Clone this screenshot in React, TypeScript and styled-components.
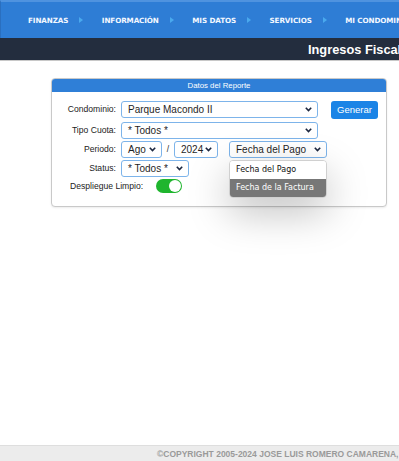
import styled, { createGlobalStyle } from 'styled-components'

const GlobalStyle = createGlobalStyle`
  html, body {
    margin: 0;
    padding: 0;
    overflow: hidden;
    background: #ffffff;
  }
  body {
    font-family: 'Liberation Sans', Arial, sans-serif;
  }
`

const sans = `'Liberation Sans', Arial, sans-serif`

const Page = styled.div`
  display: flex;
  flex-direction: column;
  height: 461px;
  width: 399px;
  overflow: hidden;
`

const NavBar = styled.nav`
  flex: none;
  height: 36px;
  display: flex;
  align-items: center;
  padding-left: 27px;
  background: #2e7dd5;
  border-top: 2px solid #4f93df;
  border-left: 1px solid #2a6fbf;
  white-space: nowrap;
  overflow: hidden;
`

const NavItem = styled.a`
  display: flex;
  align-items: center;
  flex: none;
  margin-right: 18.5px;
  color: #f4f8ff;
  font-family: 'DejaVu Sans', Verdana, sans-serif;
  font-weight: bold;
  font-size: 7.2px;
  letter-spacing: -0.1px;
  text-decoration: none;
`

const NavArrow = styled.span`
  width: 0;
  height: 0;
  margin-left: 11px;
  border-top: 3px solid transparent;
  border-bottom: 3px solid transparent;
  border-left: 4px solid #4aa9ee;
`

const TitleBar = styled.header`
  flex: none;
  height: 22px;
  display: flex;
  align-items: center;
  padding-left: 308px;
  background: #232d3e;
  border-bottom: 1px solid #c8c8c8;
  white-space: nowrap;
  overflow: hidden;
`

const Title = styled.h1`
  margin: 0;
  color: #ffffff;
  font-family: ${sans};
  font-size: 12.8px;
  font-weight: bold;
`

const Main = styled.main`
  flex: 1;
  padding: 17px 0 0 51px;
`

const Card = styled.section`
  width: 334px;
  border: 1px solid #c9c9c9;
  border-radius: 4px;
  background: #ffffff;
  box-shadow: 0 1px 2px rgba(0, 0, 0, 0.08);
`

const CardHeader = styled.div`
  height: 13px;
  line-height: 13px;
  background: #2f7fd7;
  border-radius: 3px 3px 0 0;
  color: #ffffff;
  text-align: center;
  font-family: ${sans};
  font-size: 7.8px;
`

const Form = styled.div`
  display: flex;
  flex-direction: column;
  padding: 9px 0 13px 0;
`

const Row = styled.div<{ $h: number; $indent?: number }>`
  display: flex;
  align-items: flex-start;
  height: ${(p) => p.$h}px;
  padding-left: ${(p) => p.$indent ?? 0}px;
  position: relative;
`

const Label = styled.label<{ $auto?: boolean }>`
  flex: none;
  width: ${(p) => (p.$auto ? 'auto' : '64px')};
  height: ${(p) => (p.$auto ? '14px' : '17px')};
  line-height: ${(p) => (p.$auto ? '14px' : '17px')};
  margin-right: ${(p) => (p.$auto ? '13px' : '5px')};
  text-align: right;
  color: #222222;
  font-family: ${sans};
  font-size: 8.6px;
`

const SelectBox = styled.div<{ $w: number }>`
  position: relative;
  flex: none;
  box-sizing: border-box;
  width: ${(p) => p.$w}px;
  height: 17px;
  padding: 0 16px 0 6px;
  border: 1px solid #7db4ea;
  border-radius: 3px;
  background: #ffffff;
  color: #1f1f1f;
  font-family: ${sans};
  font-size: 10px;
  line-height: 15px;
  white-space: nowrap;
`

const Chevron = styled.svg`
  position: absolute;
  right: 5px;
  top: 5px;
  width: 7px;
  height: 5px;
`

const Slash = styled.span`
  flex: none;
  width: 12px;
  text-align: center;
  line-height: 17px;
  color: #2b2b2b;
  font-family: ${sans};
  font-size: 8.5px;
`

const Spacer = styled.span<{ $w: number }>`
  flex: none;
  width: ${(p) => p.$w}px;
`

const Button = styled.button`
  flex: none;
  width: 47px;
  height: 18px;
  margin-left: 13px;
  padding: 0;
  border: none;
  border-radius: 3px;
  background: #1b84e6;
  color: #ffffff;
  font-family: ${sans};
  font-size: 9.5px;
  line-height: 18px;
`

const Toggle = styled.span`
  position: relative;
  flex: none;
  box-sizing: border-box;
  width: 26px;
  height: 14px;
  border-radius: 7px;
  background: #1fb52e;
`

const Knob = styled.span`
  position: absolute;
  right: 1px;
  top: 1px;
  width: 12px;
  height: 12px;
  border-radius: 50%;
  background: #ffffff;
`

const Menu = styled.ul`
  position: absolute;
  left: 177px;
  top: 19px;
  width: 98px;
  box-sizing: border-box;
  margin: 0;
  padding: 0;
  list-style: none;
  border: 1px solid #d0d0d0;
  border-radius: 4px;
  background: #ffffff;
  box-shadow: 0 14px 40px rgba(0, 0, 0, 0.26);
  overflow: hidden;
  z-index: 2;
`

const MenuItem = styled.li<{ $active?: boolean }>`
  height: 18px;
  line-height: 18px;
  padding-left: 6px;
  background: ${(p) => (p.$active ? '#777777' : '#ffffff')};
  color: ${(p) => (p.$active ? '#ffffff' : '#111111')};
  font-family: 'DejaVu Sans', Verdana, sans-serif;
  font-size: 8px;
  white-space: nowrap;
`

const Footer = styled.footer`
  flex: none;
  height: 15px;
  display: flex;
  align-items: center;
  padding-left: 157px;
  background: #ececec;
  border-top: 1px solid #dedede;
  color: #9a9a9a;
  font-family: ${sans};
  font-size: 8.5px;
  font-weight: bold;
  white-space: nowrap;
  overflow: hidden;
`

function Select({ w, value }: { w: number; value: string }) {
  return (
    <SelectBox $w={w}>
      {value}
      <Chevron viewBox='0 0 7 5'>
        <polyline points='0.8,0.8 3.5,3.6 6.2,0.8' fill='none' stroke='#1c2740' strokeWidth='1.6' />
      </Chevron>
    </SelectBox>
  )
}

const navItems = ['FINANZAS', 'INFORMACIÓN', 'MIS DATOS', 'SERVICIOS', 'MI CONDOMINIO', 'SALIR']

export default function App() {
  return (
    <>
      <GlobalStyle />
      <Page>
        <NavBar>
          {navItems.map((item) => (
            <NavItem key={item}>
              {item}
              <NavArrow />
            </NavItem>
          ))}
        </NavBar>
        <TitleBar>
          <Title>Ingresos Fiscales</Title>
        </TitleBar>
        <Main>
          <Card>
            <CardHeader>Datos del Reporte</CardHeader>
            <Form>
              <Row $h={21}>
                <Label>Condominio:</Label>
                <Select w={197} value='Parque Macondo II' />
                <Button>Generar</Button>
              </Row>
              <Row $h={19}>
                <Label>Tipo Cuota:</Label>
                <Select w={197} value='* Todos *' />
              </Row>
              <Row $h={19}>
                <Label>Periodo:</Label>
                <Select w={41} value='Ago' />
                <Slash>/</Slash>
                <Select w={44} value='2024' />
                <Spacer $w={11} />
                <Select w={98} value='Fecha del Pago' />
                <Menu>
                  <MenuItem>Fecha del Pago</MenuItem>
                  <MenuItem $active>Fecha de la Factura</MenuItem>
                </Menu>
              </Row>
              <Row $h={19}>
                <Label>Status:</Label>
                <Select w={68} value='* Todos *' />
              </Row>
              <Row $h={14} $indent={18}>
                <Label $auto>Despliegue Limpio:</Label>
                <Toggle>
                  <Knob />
                </Toggle>
              </Row>
            </Form>
          </Card>
        </Main>
        <Footer>©COPYRIGHT 2005-2024 JOSE LUIS ROMERO CAMARENA, TODOS LOS DERECHOS RESERVADOS</Footer>
      </Page>
    </>
  )
}
